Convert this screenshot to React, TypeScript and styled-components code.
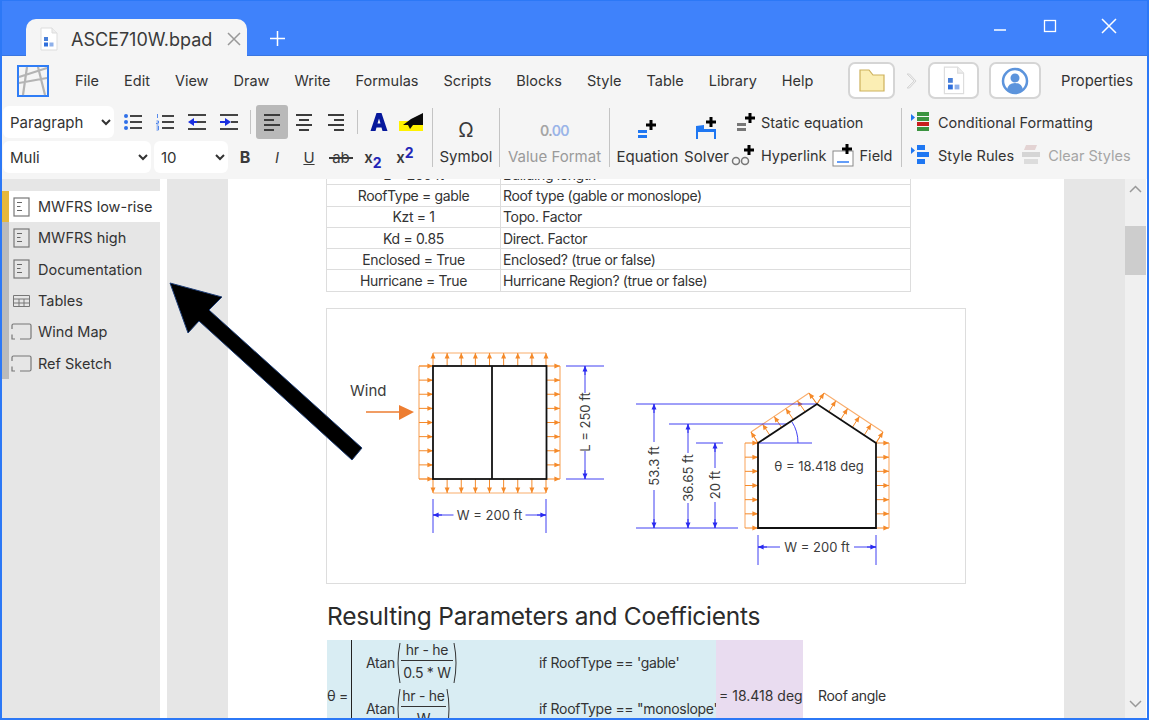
import React from 'react';
import styled, { createGlobalStyle } from 'styled-components';

const FONT = `Inter, "Noto Sans", "Liberation Sans", sans-serif`;
const ORANGE = '#f58a2a';
const ORANGE_LIGHT = '#f9ad6c';
const BLUE = '#2a2af0';

const GlobalStyle = createGlobalStyle`
  html, body { margin: 0; padding: 0; background: #fff; }
  * { box-sizing: border-box; }
`;

const Window = styled.div`
  width: 1149px;
  height: 720px;
  overflow: hidden;
  display: flex;
  flex-direction: column;
  border: 2px solid #2c78f6;
  border-top-width: 1px;
  font-family: ${FONT};
  color: #333;
  background: #fff;
`;

/* title bar */
const TitleBar = styled.div`
  height: 55px;
  flex: none;
  display: flex;
  align-items: flex-end;
  padding-left: 24px;
  background: #3f82fb;
  border-bottom: 1px solid #3a76e0;
`;

const Tab = styled.div`
  width: 221px;
  height: 37px;
  margin-bottom: -1px;
  display: flex;
  align-items: center;
  padding: 3px 5px 0 13px;
  background: #f5f5f5;
  border-radius: 10px 10px 0 0;
  font-size: 18px;
  color: #3a3a3a;
`;

const TabName = styled.span`
  margin-left: 12px;
  flex: 1;
  white-space: nowrap;
`;

const NewTab = styled.div`
  margin: 0 0 9px 23px;
  display: flex;
`;

const WindowControls = styled.div`
  margin-left: auto;
  display: flex;
  align-items: center;
  gap: 36px;
  align-self: flex-start;
  padding: 17px 30px 0 0;
`;

const CloseGlyph = styled.svg`
  margin-left: 8px;
`;

/* toolbar */
const Toolbar = styled.div`
  height: 123px;
  flex: none;
  background: #f5f5f5;
  display: flex;
  flex-direction: column;
`;

const MenuRow = styled.div`
  height: 49px;
  flex: none;
  display: flex;
  align-items: center;
  padding: 0 14px 0 15px;
`;

const MenuList = styled.nav`
  margin-left: 26px;
  display: flex;
  gap: 25px;
  font-size: 14.5px;
`;

const MenuItem = styled.span`
  white-space: nowrap;
`;

const MenuRight = styled.div`
  margin-left: auto;
  display: flex;
  align-items: center;
`;

const RoundButton = styled.div<{ $w: number; $gap?: number }>`
  width: ${(p) => p.$w}px;
  height: 37px;
  margin-left: ${(p) => p.$gap ?? 0}px;
  display: flex;
  align-items: center;
  justify-content: center;
  background: #fff;
  border: 2px solid #d5d5d5;
  border-radius: 7px;
`;

const Crumb = styled.div`
  width: 33px;
  display: flex;
  justify-content: center;
`;

const PropertiesLabel = styled.span`
  margin-left: 20px;
  font-size: 14.8px;
`;

const Ribbon = styled.div`
  flex: 1;
  display: flex;
  padding-left: 1px;
`;

const FormatColumn = styled.div`
  width: 429px;
  flex: none;
  display: flex;
  flex-direction: column;
  gap: 1px;
`;

const FormatRow = styled.div`
  height: 34px;
  display: flex;
  align-items: center;
`;

const Select = styled.select<{ $w: number; $gap?: number }>`
  width: ${(p) => p.$w}px;
  height: 32px;
  margin-right: ${(p) => p.$gap ?? 3}px;
  padding: 0 3px;
  border: none;
  border-radius: 6px;
  background: #fff;
  font-family: ${FONT};
  font-size: 15px;
  color: #333;
  outline: none;
`;

const IconButton = styled.div<{ $active?: boolean }>`
  width: 32px;
  height: 34px;
  flex: none;
  display: flex;
  align-items: center;
  justify-content: center;
  border-radius: 3px;
  background: ${(p) => (p.$active ? '#b9b9b9' : 'transparent')};
`;

const InlineSep = styled.div`
  width: 1px;
  height: 24px;
  margin: 0 5px 0 5px;
  background: #c4c4c4;
`;

const GroupSep = styled.div`
  width: 1px;
  height: 59px;
  margin-top: 3px;
  flex: none;
  background: #c4c4c4;
`;

const StackGroup = styled.div<{ $w: number }>`
  width: ${(p) => p.$w}px;
  flex: none;
  height: 59px;
  margin-top: 3px;
  display: flex;
  flex-direction: column;
  align-items: center;
  justify-content: space-between;
  font-size: 15px;
`;

const StackIcon = styled.div`
  height: 32px;
  display: flex;
  align-items: flex-end;
  justify-content: center;
`;

const StackLabel = styled.span<{ $muted?: boolean }>`
  white-space: nowrap;
  line-height: 20px;
  color: ${(p) => (p.$muted ? '#9a9a9a' : '#333')};
`;

const OmegaGlyph = styled.span`
  margin-bottom: -4px;
  font-size: 20px;
  line-height: 28px;
  color: #3a3a3a;
`;

const ValuePreview = styled.span`
  margin-bottom: -2px;
  font-size: 14px;
  font-weight: 600;
  line-height: 22px;
  letter-spacing: -0.6px;
  color: #9ab4e8;
`;

const ValueMuted = styled.span`
  color: #a5a5a5;
`;

const ActionColumn = styled.div<{ $w: number; $pad?: number }>`
  width: ${(p) => p.$w}px;
  flex: none;
  height: 65px;
  display: flex;
  flex-direction: column;
  justify-content: space-between;
  padding-top: 2px;
  padding-left: ${(p) => p.$pad ?? 0}px;
`;

const ActionRow = styled.div`
  height: 30px;
  display: flex;
  align-items: center;
  font-size: 14.5px;
  white-space: nowrap;
`;

const ActionLabel = styled.span<{ $muted?: boolean; $gap?: number }>`
  margin-left: ${(p) => p.$gap ?? 6}px;
  color: ${(p) => (p.$muted ? '#a5a5a5' : '#333')};
`;

const ActionSpacer = styled.span<{ $w: number }>`
  width: ${(p) => p.$w}px;
  flex: none;
`;

/* main area */
const Body = styled.div`
  flex: 1;
  min-height: 0;
  display: flex;
`;

const Sidebar = styled.aside`
  width: 158px;
  flex: none;
  padding-top: 12px;
  background: #e6e6e6;
`;

const TabList = styled.div`
  display: flex;
  flex-direction: column;
`;

const TabRow = styled.div<{ $active?: boolean }>`
  height: 31.3px;
  display: flex;
  align-items: center;
  font-size: 14.5px;
  white-space: nowrap;
  color: #333;
  border-left: 7px solid ${(p) => (p.$active ? '#e6b83c' : '#bbbbbb')};
  background: ${(p) => (p.$active ? '#fff' : 'transparent')};
`;

const TabIcon = styled.div`
  width: 29px;
  flex: none;
  padding-right: 4px;
  display: flex;
  justify-content: center;
`;

const Gap = styled.div`
  width: 7px;
  flex: none;
  background: #fff;
`;

const Gutter = styled.div`
  width: 61px;
  flex: none;
  background: #e6e6e6;
`;

const Page = styled.main`
  width: 836px;
  flex: none;
  overflow: hidden;
  padding-left: 98px;
  background: #fff;
`;

const ParamTable = styled.table`
  width: 584px;
  margin-top: -16px;
  border-collapse: collapse;
  font-size: 14px;
  table-layout: fixed;
`;

const ParamCell = styled.td<{ $center?: boolean }>`
  height: 21.3px;
  padding: 1px 2px 0;
  border: 1px solid #dddddd;
  line-height: 18px;
  text-align: ${(p) => (p.$center ? 'center' : 'left')};
  letter-spacing: -0.35px;
  white-space: nowrap;
`;

const Figure = styled.figure`
  width: 640px;
  height: 276px;
  margin: 16px 0 0;
  border: 1px solid #dddddd;
`;

const FigureSvg = styled.svg`
  display: block;
`;

const Heading = styled.h2`
  margin: 18px 0 9px 1px;
  font-size: 24.5px;
  font-weight: 400;
  line-height: 29px;
  letter-spacing: -0.25px;
  color: #2b2b2b;
  white-space: nowrap;
`;

const CalcRow = styled.div`
  display: flex;
  align-items: center;
  height: 112px;
  margin-left: 1px;
  font-size: 14px;
  letter-spacing: -0.3px;
  white-space: nowrap;
`;

const CalcInput = styled.div`
  width: 389px;
  height: 100%;
  display: flex;
  align-items: center;
  background: #d9edf3;
`;

const CalcSymbol = styled.span`
  width: 24px;
  flex: none;
`;

const Cases = styled.div`
  height: 100%;
  border-left: 1.5px solid #222;
  padding-left: 14px;
  display: flex;
  flex-direction: column;
`;

const CaseRow = styled.div`
  height: 46px;
  display: flex;
  align-items: center;
`;

const CaseExpr = styled.div`
  width: 173px;
  display: flex;
  align-items: center;
`;

const Fraction = styled.div<{ $w: number }>`
  width: ${(p) => p.$w}px;
  display: flex;
  flex-direction: column;
  align-items: center;
`;

const FractionTop = styled.span`
  width: 100%;
  text-align: center;
  line-height: 20px;
  border-bottom: 1px solid #333;
`;

const FractionBottom = styled.span`
  line-height: 24px;
`;

const CalcResult = styled.div`
  width: 87px;
  height: 100%;
  display: flex;
  align-items: center;
  padding-left: 3px;
  letter-spacing: 0;
  background: #e9dcf0;
`;

const CalcNote = styled.span`
  margin-left: 15px;
`;

const Scrollbar = styled.div`
  width: 21px;
  flex: none;
  display: flex;
  flex-direction: column;
  background: #f0f0f0;
`;

const ScrollUp = styled.div`
  height: 22px;
  padding-top: 6px;
  display: flex;
  justify-content: center;
`;

const ScrollThumb = styled.div`
  height: 49px;
  margin-top: 25px;
  background: #cdcdcd;
`;

const ScrollDown = styled.div`
  margin-top: auto;
  height: 18px;
  display: flex;
  justify-content: center;
`;

const ArrowOverlay = styled.svg`
  position: absolute;
  left: 0;
  top: 0;
  pointer-events: none;
`;

const Root = styled.div`
  position: relative;
  width: 1149px;
  height: 720px;
`;

/* icons */
const DocFile = ({ size = 20 }: { size?: number }) => (
  <svg width={size} height={size * 1.2} viewBox="0 0 20 24">
    <path d="M2 1h11l5 5v17H2z" fill="#fff" stroke="#ddd" />
    <path d="M13 1v5h5" fill="#eee" stroke="#ddd" />
    <rect x="5" y="10" width="4" height="4" fill="#4a80d8" />
    <rect x="5" y="15.500" width="4" height="4" fill="#2f6fdc" />
    <rect x="10.500" y="15.500" width="4" height="4" fill="#8eb0ea" />
  </svg>
);

const Logo = () => (
  <svg width="32" height="32" viewBox="0 0 32 32">
    <rect x="1" y="1" width="30" height="30" fill="#f5f5f5" stroke="#2f7df6" strokeWidth="2" />
    <path d="M2 12 30 3M2 18 30 13M10 2 6 30M21 2 28 30" stroke="#b4b4b4" strokeWidth="2.200" fill="none" />
  </svg>
);

const ListIcon = ({ kind }: { kind: 'bullet' | 'number' | 'out' | 'in' }) => (
  <svg width="20" height="18" viewBox="0 0 20 18">
    {kind === 'bullet' && (
      <g fill="#2f6fe8">
        <rect x="1" y="1" width="4" height="4" rx="2" />
        <rect x="1" y="7" width="4" height="4" rx="2" />
        <rect x="1" y="13" width="4" height="4" rx="2" />
      </g>
    )}
    {kind === 'number' && <path d="M2.500 1v4M1.500 8h2v2h-2v1h2M1.500 13h2v4h-2M1.500 15h2" stroke="#2f6fe8" strokeWidth="0.800" fill="none" />}
    {(kind === 'bullet' || kind === 'number') && <path d="M7 3h12M7 9h12M7 15h12" stroke="#444" strokeWidth="1.800" />}
    {kind === 'out' && (
      <>
        <path d="M1 2h18M10 9h9M1 16h18" stroke="#444" strokeWidth="1.800" />
        <path d="M1 9 7 5v8z" fill="#1a2fe0" />
        <path d="M6 9h4" stroke="#1a2fe0" strokeWidth="2" />
      </>
    )}
    {kind === 'in' && (
      <>
        <path d="M1 2h18M12 9h7M1 16h18" stroke="#444" strokeWidth="1.800" />
        <path d="M12 9 6 5v8z" fill="#1a2fe0" />
        <path d="M1 9h6" stroke="#1a2fe0" strokeWidth="2" />
      </>
    )}
  </svg>
);

const AlignIcon = ({ kind }: { kind: 'left' | 'center' | 'right' }) => {
  const lines = {
    left: 'M1 2h16M1 7h10M1 12h16M1 17h10',
    center: 'M1 2h16M4 7h10M1 12h16M4 17h10',
    right: 'M1 2h16M7 7h10M1 12h16M7 17h10',
  };
  return (
    <svg width="18" height="19" viewBox="0 0 18 19">
      <path d={lines[kind]} stroke="#3c3c3c" strokeWidth="1.800" />
    </svg>
  );
};

const TextColorIcon = () => (
  <svg width="18" height="20" viewBox="0 0 18 20">
    <path d="M6.500 1h5L17.500 19h-5l-1-3.500h-5L5.500 19h-5zM9 6.500 7.500 11.500h3z" fill="#06189c" fillRule="evenodd" />
  </svg>
);

const HighlightIcon = () => (
  <svg width="25" height="19" viewBox="0 0 25 19">
    <rect x="0" y="8" width="24" height="10" fill="#fff200" />
    <path d="M4 12 12 6 24 0v12H14l-3 4-2-4z" fill="#0a0a0a" />
  </svg>
);

const SmallLetter = styled.span<{ $weight?: number; $italic?: boolean; $under?: boolean; $size?: number }>`
  font-size: ${(p) => p.$size ?? 15}px;
  font-weight: ${(p) => p.$weight ?? 400};
  font-style: ${(p) => (p.$italic ? 'italic' : 'normal')};
  text-decoration: ${(p) => (p.$under ? 'underline' : 'none')};
  color: #3a3a3a;
`;

const StruckLetters = styled.span`
  position: relative;
  font-size: 15px;
  color: #3a3a3a;
  &::after {
    content: '';
    position: absolute;
    left: -3px;
    right: -3px;
    top: 50%;
    height: 1.500px;
    background: #3a3a3a;
  }
`;

const SubSup = styled.span<{ $up?: boolean }>`
  font-size: 14px;
  font-weight: 700;
  color: #2326b8;
  position: relative;
  top: ${(p) => (p.$up ? '-5px' : '5px')};
`;

const PlusBadge = ({ x, y }: { x: number; y: number }) => (
  <path d={`M${x} ${y - 5}v10M${x - 5} ${y}h10`} stroke="#000" strokeWidth="3" />
);

const EquationIcon = ({ tone = '#1f77f2' }: { tone?: string }) => (
  <svg width="22" height="22" viewBox="0 0 22 22">
    <rect x="1" y="12" width="9" height="3" fill={tone} />
    <rect x="1" y="17" width="9" height="3" fill={tone} />
    <PlusBadge x={14} y={7} />
  </svg>
);

const SolverIcon = () => (
  <svg width="24" height="24" viewBox="0 0 24 24">
    <path d="M1 23V10l8-1v4h12v10h-2v-7H3v7z" fill="#1f77f2" />
    <PlusBadge x={16} y={6} />
  </svg>
);

const LinkIcon = () => (
  <svg width="25" height="24" viewBox="0 0 25 24">
    <circle cx="5" cy="18" r="3.500" fill="none" stroke="#777" strokeWidth="1.500" />
    <circle cx="14" cy="18" r="3.500" fill="none" stroke="#777" strokeWidth="1.500" />
    <PlusBadge x={18} y={7} />
  </svg>
);

const FieldIcon = () => (
  <svg width="23" height="24" viewBox="0 0 23 24">
    <rect x="1" y="8" width="20" height="15" fill="#fff" stroke="#8a8a8a" />
    <path d="M5 19h12" stroke="#2f7df6" strokeWidth="1.500" />
    <PlusBadge x={15} y={6} />
  </svg>
);

const CondIcon = () => (
  <svg width="20" height="22" viewBox="0 0 20 22">
    <path d="M1 3 5 6.500 1 10z" fill="#1f77f2" />
    <rect x="7" y="1" width="12" height="4" fill="#3b9440" />
    <rect x="7" y="6" width="12" height="4" fill="#3b9440" />
    <rect x="7" y="11" width="12" height="4" fill="#c81e1e" />
    <rect x="7" y="16" width="12" height="4" fill="#3b9440" />
  </svg>
);

const StyleRulesIcon = () => (
  <svg width="20" height="22" viewBox="0 0 20 22">
    <path d="M1 3 5 6.500 1 10z" fill="#1f77f2" />
    <rect x="7" y="1" width="8" height="5" fill="#1f77f2" />
    <rect x="7" y="8" width="12" height="5" fill="#1f77f2" />
    <rect x="7" y="15" width="8" height="5" fill="#1f77f2" />
  </svg>
);

const ClearIcon = () => (
  <svg width="20" height="22" viewBox="0 0 20 22">
    <path d="M3 6 5 1h11l-2 5z" fill="#e3d3d3" />
    <rect x="1" y="8" width="18" height="5" fill="#d5d5d5" />
    <rect x="3" y="15" width="14" height="5" fill="#dcdcdc" />
  </svg>
);

const PageIcon = () => (
  <svg width="17" height="20" viewBox="0 0 17 20">
    <rect x="1" y="1" width="15" height="18" fill="none" stroke="#777" strokeWidth="1.200" />
    <path d="M4 5.500h5M4 9.500h3.500M4 13.500h5" stroke="#666" strokeWidth="1.200" />
  </svg>
);

const TableIcon = () => (
  <svg width="17" height="12" viewBox="0 0 17 12">
    <path d="M.5.500h16v11H.500zM.5 4h16M.5 8h16M6 4v8M11 4v8" fill="none" stroke="#777" />
  </svg>
);

const SketchIcon = () => (
  <svg width="21" height="17" viewBox="0 0 21 17">
    <path d="M1 6V2.500Q1 1 2.500 1h16Q20 1 20 2.500v12Q20 16 18.500 16H9M1 11.500V16h3" fill="none" stroke="#777" strokeWidth="1.200" />
  </svg>
);

const Paren = ({ h, flip }: { h: number; flip?: boolean }) => (
  <svg width="6" height={h} viewBox={`0 0 6 ${h}`} style={flip ? { transform: 'scaleX(-1)' } : undefined}>
    <path d={`M5 1Q1 ${h / 2} 5 ${h - 1}`} fill="none" stroke="#333" />
  </svg>
);

/* drawing helpers, coordinates follow the page pixels */
const range = (from: number, to: number, n: number) =>
  Array.from({ length: n }, (_, i) => from + ((to - from) * i) / (n - 1));

const Arrow = ({ x1, y1, x2, y2, color = ORANGE, head = 4 }: { x1: number; y1: number; x2: number; y2: number; color?: string; head?: number }) => {
  const a = Math.atan2(y2 - y1, x2 - x1);
  const w = head * 0.62;
  const bx = x2 - head * 1.4 * Math.cos(a);
  const by = y2 - head * 1.4 * Math.sin(a);
  const p1 = `${bx - w * Math.sin(a)},${by + w * Math.cos(a)}`;
  const p2 = `${bx + w * Math.sin(a)},${by - w * Math.cos(a)}`;
  return (
    <g>
      <line x1={x1} y1={y1} x2={x2} y2={y2} stroke={color} strokeWidth="1" />
      <polygon points={`${x2},${y2} ${p1} ${p2}`} fill={color} />
    </g>
  );
};

const Dim = styled.text`
  font-family: ${FONT};
  font-size: 13px;
  fill: #3c3c3c;
  text-anchor: middle;
  dominant-baseline: central;
`;

const WindLabel = styled.text`
  font-family: ${FONT};
  font-size: 15px;
  fill: #3c3c3c;
`;

const VDim = ({ x, y1, y2, cy, gap, label }: { x: number; y1: number; y2: number; cy: number; gap: number; label: string }) => (
  <g>
    <line x1={x} y1={y1} x2={x} y2={cy - gap} stroke={BLUE} strokeWidth="0.900" />
    <line x1={x} y1={cy + gap} x2={x} y2={y2} stroke={BLUE} strokeWidth="0.900" />
    <Arrow x1={x} y1={y1 + 9} x2={x} y2={y1} color={BLUE} />
    <Arrow x1={x} y1={y2 - 9} x2={x} y2={y2} color={BLUE} />
    <Dim x={x} y={cy} transform={`rotate(-90 ${x} ${cy})`}>{label}</Dim>
  </g>
);

const HDim = ({ x1, x2, y, vy1, vy2, gap }: { x1: number; x2: number; y: number; vy1: number; vy2: number; gap: number }) => {
  const cx = (x1 + x2) / 2;
  return (
    <g>
      <path d={`M${x1} ${vy1}V${vy2}M${x2} ${vy1}V${vy2}M${x1} ${y}H${cx - gap}M${cx + gap} ${y}H${x2}`} stroke={BLUE} strokeWidth="0.900" fill="none" />
      <Arrow x1={x1 + 9} y1={y} x2={x1} y2={y} color={BLUE} />
      <Arrow x1={x2 - 9} y1={y} x2={x2} y2={y} color={BLUE} />
      <Dim x={cx} y={y}>W = 200 ft</Dim>
    </g>
  );
};

const WindFigure = () => {
  const planX = range(433, 546, 9);
  const planY = range(366, 479, 9);
  const wallY = range(443, 528, 7);
  const slope = range(0, 1, 6);
  return (
    <FigureSvg width="638" height="274" viewBox="327 309 638 274">
      {/* plan view */}
      <path d="M433 353H546M419 366V479M560 366V479M433 493H546" stroke={ORANGE_LIGHT} strokeWidth="1.200" fill="none" />
      <path d="M419 366H433M419 479H433" stroke={ORANGE_LIGHT} fill="none" />
      {planX.map((x) => (
        <React.Fragment key={x}>
          <Arrow x1={x} y1={366} x2={x} y2={353} />
          <Arrow x1={x} y1={479} x2={x} y2={493} />
        </React.Fragment>
      ))}
      {planY.map((y) => (
        <React.Fragment key={y}>
          <Arrow x1={419} y1={y} x2={433} y2={y} />
          <Arrow x1={547} y1={y} x2={560} y2={y} />
        </React.Fragment>
      ))}
      <rect x="433" y="366" width="113.500" height="113" fill="#fff" stroke="#111" strokeWidth="1.800" />
      <line x1="492" y1="366" x2="492" y2="479" stroke="#111" strokeWidth="1.800" />
      <WindLabel x="350" y="396">Wind</WindLabel>
      <line x1="366" y1="412" x2="400" y2="412" stroke="#ed7d31" strokeWidth="1.500" />
      <polygon points="414,412 399,405 399,420" fill="#ed7d31" />
      <path d="M566 366H604M566 479H604" stroke={BLUE} strokeWidth="0.900" />
      <VDim x={585} y1={366} y2={479} cy={422} gap={29} label="L = 250 ft" />
      <HDim x1={433} x2={546} y={515} vy1={499} vy2={533} gap={36} />

      {/* elevation */}
      <path d="M745 443V528M889 443V528M751 432 809 393M824 393 883 432M751 432 758 443M809 393 817 404M824 393 817 404M883 432 876 443" stroke={ORANGE_LIGHT} strokeWidth="1.100" fill="none" />
      {wallY.map((y) => (
        <React.Fragment key={y}>
          <Arrow x1={745} y1={y} x2={758} y2={y} />
          <Arrow x1={876} y1={y} x2={889} y2={y} />
        </React.Fragment>
      ))}
      {slope.map((t) => (
        <React.Fragment key={t}>
          <Arrow x1={758 + 59 * t} y1={443 - 39 * t} x2={751 + 58 * t} y2={432 - 39 * t} />
          <Arrow x1={876 - 59 * t} y1={443 - 39 * t} x2={883 - 59 * t} y2={432 - 39 * t} />
        </React.Fragment>
      ))}
      <path d="M636 404H817M669 424H787M696 443H723M636 528H738M758 443H812" stroke={BLUE} strokeWidth="0.900" fill="none" />
      <path d="M792 422Q798 431 798 443" stroke={BLUE} strokeWidth="0.900" fill="none" />
      <path d="M758 443 817 404 876 443V528H758Z" fill="none" stroke="#111" strokeWidth="1.800" />
      <Dim x={819} y={466}>θ = 18.418 deg</Dim>
      <VDim x={654} y1={404} y2={528} cy={466} gap={24} label="53.3 ft" />
      <VDim x={688} y1={424} y2={528} cy={478} gap={25} label="36.65 ft" />
      <VDim x={715} y1={443} y2={528} cy={485} gap={17} label="20 ft" />
      <HDim x1={758} x2={876} y={547} vy1={535} vy2={565} gap={37} />
    </FigureSvg>
  );
};

const MENU = ['File', 'Edit', 'View', 'Draw', 'Write', 'Formulas', 'Scripts', 'Blocks', 'Style', 'Table', 'Library', 'Help'];

const TABS = [
  { name: 'MWFRS low-rise', icon: <PageIcon />, active: true },
  { name: 'MWFRS high', icon: <PageIcon /> },
  { name: 'Documentation', icon: <PageIcon /> },
  { name: 'Tables', icon: <TableIcon /> },
  { name: 'Wind Map', icon: <SketchIcon /> },
  { name: 'Ref Sketch', icon: <SketchIcon /> },
];

const PARAMS = [
  ['L = 250 ft', 'Building length'],
  ['RoofType = gable', 'Roof type (gable or monoslope)'],
  ['Kzt = 1', 'Topo. Factor'],
  ['Kd = 0.85', 'Direct. Factor'],
  ['Enclosed = True', 'Enclosed? (true or false)'],
  ['Hurricane = True', 'Hurricane Region? (true or false)'],
];

const App: React.FC = () => {
  return (
    <Root>
      <GlobalStyle />
      <Window>
        <TitleBar>
          <Tab>
            <DocFile />
            <TabName>ASCE710W.bpad</TabName>
            <svg width="16" height="16" viewBox="0 0 16 16">
              <path d="M2 2 14 14M14 2 2 14" stroke="#999" strokeWidth="1.500" />
            </svg>
          </Tab>
          <NewTab>
            <svg width="15" height="15" viewBox="0 0 15 15">
              <path d="M7.500 0v15M0 7.500h15" stroke="#fff" strokeWidth="1.500" />
            </svg>
          </NewTab>
          <WindowControls>
            <svg width="14" height="14" viewBox="0 0 14 14">
              <path d="M1 11h12" stroke="#fff" strokeWidth="1.500" />
            </svg>
            <svg width="14" height="14" viewBox="0 0 14 14">
              <rect x="1.500" y="1.500" width="11" height="11" fill="none" stroke="#fff" strokeWidth="1.300" />
            </svg>
            <CloseGlyph width="16" height="16" viewBox="0 0 16 16">
              <path d="M1 1 15 15M15 1 1 15" stroke="#fff" strokeWidth="1.500" />
            </CloseGlyph>
          </WindowControls>
        </TitleBar>

        <Toolbar>
          <MenuRow>
            <Logo />
            <MenuList>
              {MENU.map((m) => (
                <MenuItem key={m}>{m}</MenuItem>
              ))}
            </MenuList>
            <MenuRight>
              <RoundButton $w={47}>
                <svg width="26" height="23" viewBox="0 0 26 23">
                  <path d="M1 22V1h9l4 5h11v16z" fill="#fbeeb4" stroke="#cdb15c" strokeWidth="1.200" />
                </svg>
              </RoundButton>
              <Crumb>
                <svg width="11" height="16" viewBox="0 0 11 16">
                  <path d="M1 1 8 8 1 15h2.500L10 8 3.500 1z" fill="#eee" stroke="#d5d5d5" />
                </svg>
              </Crumb>
              <RoundButton $w={51}>
                <DocFile size={24} />
              </RoundButton>
              <RoundButton $w={52} $gap={10}>
                <svg width="28" height="28" viewBox="0 0 28 28">
                  <circle cx="14" cy="14" r="12" fill="#fff" stroke="#5c94dc" strokeWidth="2.500" />
                  <circle cx="14" cy="11" r="4.500" fill="#5c94dc" />
                  <path d="M6 23q1-7 8-7t8 7q-4 3.500-8 3.500T6 23z" fill="#5c94dc" />
                </svg>
              </RoundButton>
              <PropertiesLabel>Properties</PropertiesLabel>
            </MenuRight>
          </MenuRow>

          <Ribbon>
            <FormatColumn>
              <FormatRow>
                <Select $w={111} defaultValue="Paragraph" aria-label="Block type">
                  <option>Paragraph</option>
                </Select>
                <IconButton><ListIcon kind="bullet" /></IconButton>
                <IconButton><ListIcon kind="number" /></IconButton>
                <IconButton><ListIcon kind="out" /></IconButton>
                <IconButton><ListIcon kind="in" /></IconButton>
                <InlineSep />
                <IconButton $active><AlignIcon kind="left" /></IconButton>
                <IconButton><AlignIcon kind="center" /></IconButton>
                <IconButton><AlignIcon kind="right" /></IconButton>
                <InlineSep />
                <IconButton><TextColorIcon /></IconButton>
                <IconButton><HighlightIcon /></IconButton>
              </FormatRow>
              <FormatRow>
                <Select $w={148} defaultValue="Muli" aria-label="Font">
                  <option>Muli</option>
                </Select>
                <Select $w={74} $gap={1} defaultValue="10" aria-label="Size">
                  <option>10</option>
                </Select>
                <IconButton><SmallLetter $weight={700} $size={16}>B</SmallLetter></IconButton>
                <IconButton><SmallLetter $italic>I</SmallLetter></IconButton>
                <IconButton><SmallLetter $under>U</SmallLetter></IconButton>
                <IconButton><StruckLetters>ab</StruckLetters></IconButton>
                <IconButton><SmallLetter $weight={600}>x</SmallLetter><SubSup>2</SubSup></IconButton>
                <IconButton><SmallLetter $weight={600}>x</SmallLetter><SubSup $up>2</SubSup></IconButton>
              </FormatRow>
            </FormatColumn>

            <GroupSep />
            <StackGroup $w={66}>
              <StackIcon>
                <OmegaGlyph>Ω</OmegaGlyph>
              </StackIcon>
              <StackLabel>Symbol</StackLabel>
            </StackGroup>
            <GroupSep />
            <StackGroup $w={109}>
              <StackIcon>
                <ValuePreview><ValueMuted>0.</ValueMuted>00</ValuePreview>
              </StackIcon>
              <StackLabel $muted>Value Format</StackLabel>
            </StackGroup>
            <GroupSep />
            <StackGroup $w={75}>
              <StackIcon><EquationIcon /></StackIcon>
              <StackLabel>Equation</StackLabel>
            </StackGroup>
            <StackGroup $w={43}>
              <StackIcon><SolverIcon /></StackIcon>
              <StackLabel>Solver</StackLabel>
            </StackGroup>
            <ActionColumn $w={173} $pad={3}>
              <ActionRow><ActionSpacer $w={5} /><EquationIcon tone="#777" /><ActionLabel $gap={3}>Static equation</ActionLabel></ActionRow>
              <ActionRow>
                <LinkIcon />
                <ActionLabel $gap={5}>Hyperlink</ActionLabel>
                <ActionSpacer $w={5} />
                <FieldIcon />
                <ActionLabel $gap={5}>Field</ActionLabel>
              </ActionRow>
            </ActionColumn>
            <GroupSep />
            <ActionColumn $w={235} $pad={8}>
              <ActionRow><CondIcon /><ActionLabel $gap={8}>Conditional Formatting</ActionLabel></ActionRow>
              <ActionRow>
                <StyleRulesIcon />
                <ActionLabel $gap={8}>Style Rules</ActionLabel>
                <ActionSpacer $w={7} />
                <ClearIcon />
                <ActionLabel $muted $gap={7}>Clear Styles</ActionLabel>
              </ActionRow>
            </ActionColumn>
          </Ribbon>
        </Toolbar>

        <Body>
          <Sidebar>
            <TabList>
              {TABS.map((t) => (
                <TabRow key={t.name} $active={t.active}>
                  <TabIcon>{t.icon}</TabIcon>
                  {t.name}
                </TabRow>
              ))}
            </TabList>
          </Sidebar>
          <Gap />
          <Gutter />
          <Page>
            <ParamTable>
              <colgroup>
                <col width="174" />
                <col width="410" />
              </colgroup>
              <tbody>
                {PARAMS.map(([a, b]) => (
                  <tr key={a}>
                    <ParamCell $center>{a}</ParamCell>
                    <ParamCell>{b}</ParamCell>
                  </tr>
                ))}
              </tbody>
            </ParamTable>
            <Figure>
              <WindFigure />
            </Figure>
            <Heading>Resulting Parameters and Coefficients</Heading>
            <CalcRow>
              <CalcInput>
                <CalcSymbol>θ =</CalcSymbol>
                <Cases>
                  <CaseRow>
                    <CaseExpr>
                      Atan
                      <Paren h={42} />
                      <Fraction $w={52}>
                        <FractionTop>hr - he</FractionTop>
                        <FractionBottom>0.5 * W</FractionBottom>
                      </Fraction>
                      <Paren h={42} flip />
                    </CaseExpr>
                    if RoofType == 'gable'
                  </CaseRow>
                  <CaseRow>
                    <CaseExpr>
                      Atan
                      <Paren h={42} />
                      <Fraction $w={45}>
                        <FractionTop>hr - he</FractionTop>
                        <FractionBottom>W</FractionBottom>
                      </Fraction>
                      <Paren h={42} flip />
                    </CaseExpr>
                    if RoofType == "monoslope"
                  </CaseRow>
                </Cases>
              </CalcInput>
              <CalcResult>= 18.418 deg</CalcResult>
              <CalcNote>Roof angle</CalcNote>
            </CalcRow>
          </Page>
          <Gutter />
          <Scrollbar>
            <ScrollUp>
              <svg width="13" height="8" viewBox="0 0 13 8">
                <path d="M1 7 6.500 1.500 12 7" fill="none" stroke="#999" strokeWidth="1.500" />
              </svg>
            </ScrollUp>
            <ScrollThumb />
            <ScrollDown>
              <svg width="13" height="8" viewBox="0 0 13 8">
                <path d="M1 1 6.500 6.500 12 1" fill="none" stroke="#999" strokeWidth="1.500" />
              </svg>
            </ScrollDown>
          </Scrollbar>
        </Body>
      </Window>
      <ArrowOverlay width="1149" height="720" viewBox="0 0 1149 720">
        <polygon points="170,283 222,297 209,310 362,448 352,460 199,321 188,333" fill="#000" stroke="#1f3f78" strokeWidth="1" />
      </ArrowOverlay>
    </Root>
  );
};

export default App;
